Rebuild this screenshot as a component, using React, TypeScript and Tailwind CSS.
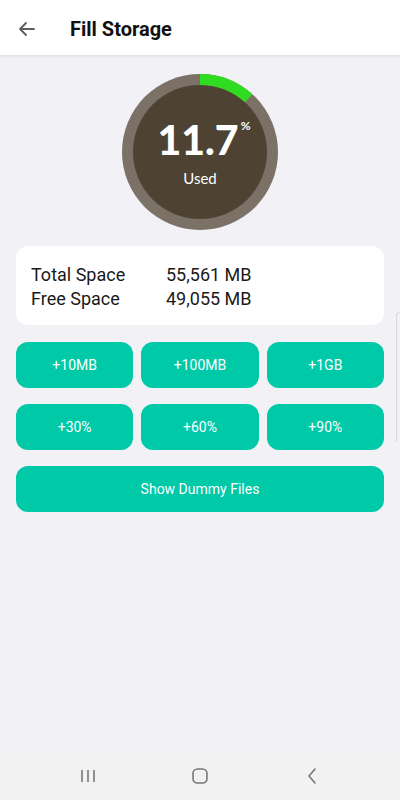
import React from "react";

function Gauge() {
  const r = 72.5;
  const c = 2 * Math.PI * r;
  const pct = 11.7;
  return (
    <div className="relative w-[156px] h-[156px]">
      <svg width="156" height="156" viewBox="0 0 156 156" className="absolute inset-0">
        <circle cx="78" cy="78" r="78" fill="#7b7166" />
        <circle cx="78" cy="78" r="67" fill="#4e4233" />
        <circle
          cx="78"
          cy="78"
          r={r}
          fill="none"
          stroke="#2fdc1f"
          strokeWidth="11"
          strokeDasharray={`${(c * pct) / 100} ${c}`}
          transform="rotate(-90 78 78)"
        />
      </svg>
      <div className="absolute inset-0 flex flex-col items-center justify-center" style={{ fontFamily: "Lato, 'Open Sans', sans-serif" }}>
        <div className="flex items-start text-white ml-[8px]">
          <span className="text-[41px] font-black leading-none">11.7</span>
          <span className="text-[12px] font-bold leading-none mt-[1px] ml-[2px]">%</span>
        </div>
        <span className="text-white text-[15px] mt-[11px] leading-none">Used</span>
      </div>
    </div>
  );
}

function Btn({ label }: { label: string }) {
  return (
    <button className="h-[46px] rounded-[12px] bg-[#00c9a7] text-white text-[14px] flex items-center justify-center pt-[1px]">
      {label}
    </button>
  );
}

export default function App() {
  return (
    <div
      className="w-[400px] h-[800px] bg-[#f1f1f6] flex flex-col relative overflow-hidden"
      style={{ fontFamily: "Roboto, 'Noto Sans', sans-serif" }}
    >
      <header className="h-[56px] bg-white flex items-center border-b border-[#e4e4ea] shadow-[0_1px_2px_rgba(0,0,0,0.06)] shrink-0">
        <svg width="24" height="24" viewBox="0 0 24 24" className="ml-[15px] mt-[2px]" fill="none" stroke="#5f5f5f" strokeWidth="1.8" strokeLinecap="round" strokeLinejoin="round">
          <path d="M19 12H5M11 6l-6 6 6 6" />
        </svg>
        <h1 className="ml-[31px] mt-[3px] text-[20px] font-bold text-[#111]">Fill Storage</h1>
      </header>

      <main className="flex-1 flex flex-col px-[16px]">
        <div className="flex justify-center mt-[18px]">
          <Gauge />
        </div>

        <div className="mt-[16px] bg-white rounded-[12px] h-[79px] flex flex-col justify-center pl-[15px] pt-[3px] text-[18px] text-[#1a1a1a] leading-[24px]">
          <div className="flex">
            <span className="w-[135px]">Total Space</span>
            <span>55,561 MB</span>
          </div>
          <div className="flex">
            <span className="w-[135px]">Free Space</span>
            <span>49,055 MB</span>
          </div>
        </div>

        <div className="grid grid-cols-3 gap-x-[8px] gap-y-[16px] mt-[17px]">
          <Btn label="+10MB" />
          <Btn label="+100MB" />
          <Btn label="+1GB" />
          <Btn label="+30%" />
          <Btn label="+60%" />
          <Btn label="+90%" />
        </div>
        <button className="mt-[16px] h-[46px] rounded-[12px] bg-[#00c9a7] text-white text-[14px] flex items-center justify-center pt-[1px]">
          Show Dummy Files
        </button>
      </main>

      <div className="absolute right-0 top-[312px] w-[4px] h-[130px] border-l border-t border-[#d8d8de] rounded-tl-[4px]" />

      <nav className="h-[48px] bg-[#f2f2f2] flex items-center justify-center gap-[92px] shrink-0">
        <svg width="20" height="20" viewBox="0 0 20 20" fill="none" stroke="#777" strokeWidth="1.6">
          <path d="M4 4v12M10 4v12M16 4v12" />
        </svg>
        <svg width="20" height="20" viewBox="0 0 20 20" fill="none" stroke="#777" strokeWidth="1.6">
          <rect x="3" y="3" width="14" height="14" rx="4.5" />
        </svg>
        <svg width="20" height="20" viewBox="0 0 20 20" fill="none" stroke="#777" strokeWidth="1.6" strokeLinecap="round" strokeLinejoin="round">
          <path d="M13 3l-6 7 6 7" />
        </svg>
      </nav>
    </div>
  );
}
